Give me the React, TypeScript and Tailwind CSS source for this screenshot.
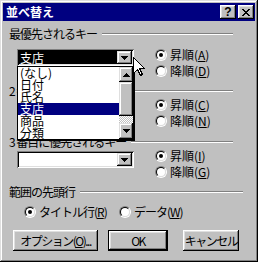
import type { ReactNode } from 'react'

// Win95 "並べ替え" (sort) dialog with the first key's combo box dropped down.

function DownArrow() {
  return (
    <svg width="7" height="4" viewBox="0 0 7 4" shapeRendering="crispEdges">
      <path d="M0 0h7v1H0zM1 1h5v1H1zM2 2h3v1H2zM3 3h1v1H3z" fill="#000" />
    </svg>
  )
}

function UpArrow() {
  return (
    <svg width="7" height="4" viewBox="0 0 7 4" shapeRendering="crispEdges">
      <path d="M3 0h1v1H3zM2 1h3v1H2zM1 2h5v1H1zM0 3h7v1H0z" fill="#000" />
    </svg>
  )
}

function Radio({ on }: { on?: boolean }) {
  return (
    <span className="relative w-[12px] h-[12px] shrink-0 rounded-full border border-t-[#808080] border-l-[#808080] border-b-white border-r-white">
      <span className="absolute inset-0 rounded-full border border-t-black border-l-black border-b-[#dfdfdf] border-r-[#dfdfdf] bg-white flex items-center justify-center">
        {on && <span className="w-[4px] h-[4px] rounded-full bg-black" />}
      </span>
    </span>
  )
}

function RadioRow({ on, children }: { on?: boolean; children: ReactNode }) {
  return (
    <div className="h-[16px] flex items-center gap-[3px] whitespace-nowrap">
      <Radio on={on} />
      <span className="leading-[12px]">{children}</span>
    </div>
  )
}

function Combo({ value, active }: { value?: string; active?: boolean }) {
  return (
    <div className="w-[117px] h-[17px] bg-white p-[2px] flex shadow-[inset_1px_1px_#808080,inset_-1px_-1px_#fff,inset_2px_2px_#000,inset_-2px_-2px_#dfdfdf]">
      <div
        className={
          active
            ? 'flex-1 bg-black text-white pl-[1px] leading-[13px]'
            : 'flex-1 pl-[1px] leading-[13px]'
        }
      >
        {value}
      </div>
      <div className="w-[15px] h-full bg-[#c0c0c0] flex items-center justify-center shadow-[inset_-1px_-1px_#000,inset_1px_1px_#dfdfdf,inset_-2px_-2px_#808080,inset_2px_2px_#fff]">
        <DownArrow />
      </div>
    </div>
  )
}

function Header({ children, wide }: { children: ReactNode; wide?: boolean }) {
  return (
    <div className={wide ? 'h-[12px] flex items-center pl-[6px] pr-[12px]' : 'h-[12px] flex items-center pl-[6px] pr-[22px]'}>
      <span className="leading-[12px] whitespace-nowrap tracking-[-1px]">{children}</span>
      <div className="ml-[5px] flex-1 h-[2px] border-t border-t-[#808080] border-b border-b-white" />
    </div>
  )
}

function Button({ children, def, w }: { children: ReactNode; def?: boolean; w: string }) {
  return (
    <div className={`${w} h-[21px] ${def ? 'border border-black' : ''}`}>
      <div className="w-full h-full bg-[#c0c0c0] flex items-center justify-center leading-[12px] whitespace-nowrap tracking-[-1.5px] shadow-[inset_-1px_-1px_#000,inset_1px_1px_#fff,inset_-2px_-2px_#808080,inset_2px_2px_#dfdfdf]">
        {children}
      </div>
    </div>
  )
}

const ITEMS = ['(なし)', '日付', '氏名', '支店', '商品', '分類']

export default function App() {
  return (
    <div className="relative w-[258px] h-[262px] bg-[#c0c0c0] p-[3px] flex flex-col text-[12px] text-black font-['Noto_Sans_CJK_JP',sans-serif] shadow-[inset_-1px_-1px_#000,inset_1px_1px_#dfdfdf,inset_-2px_-2px_#808080,inset_2px_2px_#fff] overflow-hidden">
      {/* title bar */}
      <div className="h-[18px] bg-[#000080] flex items-center pl-[3px] pr-[1px]">
        <span className="text-white font-bold leading-[12px]">並べ替え</span>
        <div className="ml-auto flex gap-[2px]">
          <div className="w-[16px] h-[14px] bg-[#c0c0c0] flex items-center justify-center font-bold text-[12px] leading-[12px] shadow-[inset_-1px_-1px_#000,inset_1px_1px_#fff,inset_-2px_-2px_#808080,inset_2px_2px_#dfdfdf] font-['Liberation_Sans',sans-serif]">
            ?
          </div>
          <div className="w-[16px] h-[14px] bg-[#c0c0c0] flex items-center justify-center shadow-[inset_-1px_-1px_#000,inset_1px_1px_#fff,inset_-2px_-2px_#808080,inset_2px_2px_#dfdfdf]">
            <svg width="8" height="7" viewBox="0 0 8 7" shapeRendering="crispEdges">
              <path d="M0 0h2v1H0zM6 0h2v1H6zM1 1h2v1H1zM5 1h2v1H5zM2 2h4v1H2zM3 3h2v1H3zM2 4h4v1H2zM1 5h2v1H1zM5 5h2v1H5zM0 6h2v1H0zM6 6h2v1H6z" fill="#000" />
            </svg>
          </div>
        </div>
      </div>

      {/* key 1 */}
      <div className="mt-[7px]">
        <Header>最優先されるキー</Header>
      </div>
      <div className="mt-[7px] h-[32px] flex">
        <div className="ml-[14px] mt-[2px]">
          <Combo value="支店" active />
        </div>
        <div className="ml-[21px] flex flex-col">
          <RadioRow on>
            昇順(<u>A</u>)
          </RadioRow>
          <RadioRow>
            降順(<u>D</u>)
          </RadioRow>
        </div>
      </div>

      {/* key 2 */}
      <div className="mt-[6px]">
        <Header>2 番目に優先されるキー</Header>
      </div>
      <div className="h-[32px] flex">
        <div className="ml-[14px] mt-[2px]">
          <Combo />
        </div>
        <div className="ml-[21px] flex flex-col">
          <RadioRow on>
            昇順(<u>C</u>)
          </RadioRow>
          <RadioRow>
            降順(<u>N</u>)
          </RadioRow>
        </div>
      </div>

      {/* key 3 */}
      <div className="mt-[7px]">
        <Header>3 番目に優先されるキー</Header>
      </div>
      <div className="h-[32px] flex">
        <div className="ml-[14px] mt-[3px]">
          <Combo />
        </div>
        <div className="ml-[21px] flex flex-col">
          <RadioRow on>
            昇順(<u>I</u>)
          </RadioRow>
          <RadioRow>
            降順(<u>G</u>)
          </RadioRow>
        </div>
      </div>

      {/* header row */}
      <div className="mt-[6px]">
        <Header wide>範囲の先頭行</Header>
      </div>
      <div className="mt-[6px] flex pl-[21px] tracking-[-1px]">
        <div className="w-[95px]">
          <RadioRow on>
            タイトル行(<u>R</u>)
          </RadioRow>
        </div>
        <RadioRow>
          データ(<u>W</u>)
        </RadioRow>
      </div>

      {/* buttons */}
      <div className="mt-[10px] flex pl-[10px]">
        <Button w="w-[85px]">
          オプション(<u>O</u>)...
        </Button>
        <div className="ml-[10px]">
          <Button w="w-[60px]" def>
            OK
          </Button>
        </div>
        <div className="ml-[15px]">
          <Button w="w-[56px]">キャンセル</Button>
        </div>
      </div>

      {/* dropped-down list of key 1 */}
      <div className="absolute left-[17px] top-[66px] w-[117px] h-[74px] bg-white border border-black shadow-[1px_1px_0_#000] flex">
        <div className="w-[101px] flex flex-col overflow-hidden">
          {ITEMS.map((it) => (
            <div
              key={it}
              className={
                it === '支店'
                  ? 'h-[12px] shrink-0 leading-[12px] pl-[2px] bg-[#000080] text-white'
                  : 'h-[12px] shrink-0 leading-[12px] pl-[2px]'
              }
            >
              {it}
            </div>
          ))}
        </div>
        <div className="w-[14px] flex flex-col">
          <div className="h-[15px] bg-[#c0c0c0] flex items-center justify-center shadow-[inset_-1px_-1px_#000,inset_1px_1px_#dfdfdf,inset_-2px_-2px_#808080,inset_2px_2px_#fff]">
            <UpArrow />
          </div>
          <div className="h-[34px] bg-[#c0c0c0] shadow-[inset_-1px_-1px_#000,inset_1px_1px_#dfdfdf,inset_-2px_-2px_#808080,inset_2px_2px_#fff]" />
          <div className="h-[7px] bg-[image:repeating-conic-gradient(#fff_0_25%,#c0c0c0_0_50%)] bg-[length:2px_2px]" />
          <div className="h-[16px] bg-[#c0c0c0] flex items-center justify-center shadow-[inset_-1px_-1px_#000,inset_1px_1px_#dfdfdf,inset_-2px_-2px_#808080,inset_2px_2px_#fff]">
            <DownArrow />
          </div>
        </div>
      </div>

      {/* mouse pointer */}
      <svg className="absolute left-[133px] top-[57px]" width="12" height="19" viewBox="0 0 12 19" shapeRendering="crispEdges">
        <path d="M0.5 0.5V16.5L4.5 12.5L7.5 18.5L9.5 17.5L6.5 11.5H11.5Z" fill="#fff" stroke="#000" />
      </svg>
    </div>
  )
}
